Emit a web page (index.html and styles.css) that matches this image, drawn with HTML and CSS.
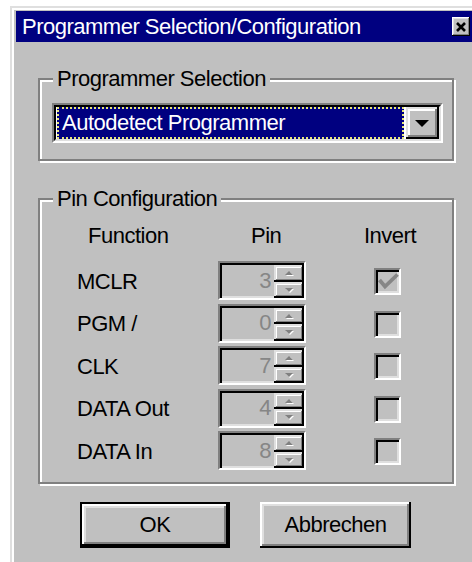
FILE: index.html
```html
<!DOCTYPE html>
<html lang="de">
<head>
<meta charset="utf-8">
<title>Programmer Selection/Configuration</title>
<link rel="stylesheet" href="styles.css">
</head>
<body>
<div class="window">
  <div class="frame">
    <div class="titlebar">
      <span class="caption">Programmer Selection/Configuration</span>
      <span class="close-btn">
        <svg width="10" height="10" viewBox="0 0 10 10"><path d="M1 1 L9 9 M9 1 L1 9" stroke="#000" stroke-width="2.6" fill="none"/></svg>
      </span>
    </div>
    <div class="client">
      <fieldset class="group group-select">
        <legend>Programmer Selection</legend>
        <div class="combo">
          <div class="combo-in">
            <div class="combo-field"><span class="combo-text">Autodetect Programmer</span></div>
            <span class="combo-btn"><span class="arrow-down"></span></span>
          </div>
        </div>
      </fieldset>

      <fieldset class="group group-pins">
        <legend>Pin Configuration</legend>
        <div class="pin-grid">
          <div class="hdr hdr-func">Function</div>
          <div class="hdr hdr-pin">Pin</div>
          <div class="hdr hdr-inv">Invert</div>

          <div class="pin-label">MCLR</div>
          <div class="spin"><div class="spin-in"><span class="spin-edit">3</span><span class="spin-btns"><span class="spin-up"></span><span class="spin-down"></span></span></div></div>
          <div class="check"><svg width="21" height="19" viewBox="0 0 21 19"><polyline points="1.5,7 7,13.5 19.5,1.5" fill="none" stroke="#868686" stroke-width="3.8"/></svg></div>

          <div class="pin-label">PGM /</div>
          <div class="spin"><div class="spin-in"><span class="spin-edit">0</span><span class="spin-btns"><span class="spin-up"></span><span class="spin-down"></span></span></div></div>
          <div class="check"></div>

          <div class="pin-label">CLK</div>
          <div class="spin"><div class="spin-in"><span class="spin-edit">7</span><span class="spin-btns"><span class="spin-up"></span><span class="spin-down"></span></span></div></div>
          <div class="check"></div>

          <div class="pin-label">DATA Out</div>
          <div class="spin"><div class="spin-in"><span class="spin-edit">4</span><span class="spin-btns"><span class="spin-up"></span><span class="spin-down"></span></span></div></div>
          <div class="check"></div>

          <div class="pin-label">DATA In</div>
          <div class="spin"><div class="spin-in"><span class="spin-edit">8</span><span class="spin-btns"><span class="spin-up"></span><span class="spin-down"></span></span></div></div>
          <div class="check"></div>
        </div>
      </fieldset>

      <div class="buttons">
        <button class="btn btn-default" type="button"><span class="btn-face">OK</span></button>
        <button class="btn" type="button"><span class="btn-face">Abbrechen</span></button>
      </div>
    </div>
  </div>
</div>
</body>
</html>
```

FILE: styles.css
```css
html, body {
  margin: 0;
  padding: 0;
  background: #fff;
  overflow: hidden;
}

body {
  font-family: "Liberation Sans", Arial, sans-serif;
  font-size: 22px;
  line-height: 24px;
  letter-spacing: -0.5px;
  color: #000;
}

/* window chrome: the dialog's right and bottom edges run off the page */
.window {
  margin: 6px 0 0 10px;
  width: 460px;
  border-top: 2px solid #dfdfdf;
  border-left: 2px solid #dfdfdf;
  background: #c0c0c0;
}

.frame {
  border-top: 2px solid #fff;
  border-left: 2px solid #fff;
  padding: 1px 0 0 2px;
}

.titlebar {
  height: 31px;
  background: #000080;
  color: #fff;
  display: flex;
  align-items: center;
  padding: 0 2px 0 6px;
}

.caption {
  flex: 1;
  white-space: nowrap;
}

.close-btn {
  width: 18px;
  height: 19px;
  background: #c0c0c0;
  display: flex;
  align-items: center;
  justify-content: center;
  box-shadow: inset -1px -1px #000, inset 1px 1px #fff, inset -2px -2px #808080, inset 2px 2px #dfdfdf;
}

.client {
  padding: 25px 0 14px 22px;
}

/* etched group boxes */
.group {
  box-sizing: border-box;
  width: 416px;
  margin: 0;
  min-width: 0;
  border: 2px solid #808080;
  box-shadow: inset 2px 2px #fff, 2px 2px #fff;
}

.group legend {
  padding: 0 4px;
  margin-left: 1px;
  background: #c0c0c0;
  white-space: nowrap;
}

.group-select {
  padding: 12px 9px 16px 12px;
  margin-bottom: 26px;
}

/* combo box */
.combo {
  box-sizing: border-box;
  height: 40px;
  border: 2px solid;
  border-color: #808080 #fff #fff #808080;
}

.combo-in {
  box-sizing: border-box;
  height: 100%;
  border: 2px solid;
  border-color: #000 #dfdfdf #dfdfdf #000;
  background: #fff;
  display: flex;
}

.combo-field {
  flex: 1;
  margin: 0 2px 0 1px;
  background: #000080;
  color: #fff;
  border: 2px dotted #e6e67a;
  display: flex;
  align-items: center;
  padding-left: 3px;
}

.combo-btn {
  width: 33px;
  background: #c0c0c0;
  display: flex;
  align-items: center;
  justify-content: center;
  box-shadow: inset -2px -2px #000, inset 2px 2px #dfdfdf, inset -4px -4px #808080, inset 4px 4px #fff;
}

.arrow-down {
  width: 0;
  height: 0;
  border-left: 7px solid transparent;
  border-right: 7px solid transparent;
  border-top: 7px solid #000;
  margin: 1px 1px 0 0;
}

/* pin table */
.group-pins {
  padding: 13px 0 12px 12px;
}

.pin-grid {
  display: grid;
  grid-template-columns: 166px 88px 68px 27px;
  grid-template-rows: 33.5px;
  grid-auto-rows: 39px;
  row-gap: 3.5px;
  align-items: center;
}

.hdr {
  align-self: start;
  white-space: nowrap;
}

.hdr-func { grid-column: 1; padding-left: 36px; }
.hdr-pin { grid-column: 2; padding-left: 33px; }
.hdr-inv { grid-column: 3 / 5; padding-left: 58px; }

.pin-label {
  grid-column: 1;
  padding-left: 25px;
  padding-top: 2px;
  white-space: nowrap;
}

.spin {
  grid-column: 2;
  box-sizing: border-box;
  height: 39px;
  border: 2px solid;
  border-color: #808080 #fff #fff #808080;
}

.spin-in {
  box-sizing: border-box;
  height: 100%;
  border-top: 2px solid #000;
  border-left: 2px solid #000;
  display: flex;
}

.spin-edit {
  flex: 1;
  border-bottom: 2px solid #dfdfdf;
  color: #868686;
  padding-right: 3px;
  display: flex;
  align-items: center;
  justify-content: flex-end;
}

.spin-btns {
  width: 30px;
  display: flex;
  flex-direction: column;
}

.spin-up, .spin-down {
  flex: 1;
  background: #c0c0c0;
  display: flex;
  align-items: center;
  justify-content: center;
  box-shadow: inset -2px -2px #000, inset 2px 2px #dfdfdf, inset -3px -3px #808080, inset 3px 3px #fff;
}

.spin-up::after, .spin-down::after {
  content: "";
  width: 0;
  height: 0;
  border-left: 4px solid transparent;
  border-right: 4px solid transparent;
  filter: drop-shadow(1px 1px 0 #fff);
}

.spin-up::after { border-bottom: 4px solid #808080; }
.spin-down::after { border-top: 4px solid #808080; }

.check {
  grid-column: 4;
  box-sizing: border-box;
  width: 27px;
  height: 27px;
  margin-top: 2px;
  border: 2px solid;
  border-color: #808080 #fff #fff #808080;
  background: #c0c0c0;
  box-shadow: inset 2px 2px #000, inset -2px -2px #dfdfdf;
  display: flex;
  align-items: center;
  justify-content: center;
}

.check svg {
  margin: 2px 0 0 2px;
}

/* push buttons */
.buttons {
  display: flex;
  gap: 30px;
  margin-top: 18px;
  padding-left: 42px;
}

.btn {
  box-sizing: border-box;
  height: 46px;
  width: 151px;
  padding: 0;
  border: none;
  background: #c0c0c0;
  font: inherit;
  letter-spacing: inherit;
  color: #000;
  display: flex;
  box-shadow: inset -2px -2px #000, inset 2px 2px #fff, inset -4px -4px #808080, inset 4px 4px #dfdfdf;
}

.btn-face {
  flex: 1;
  display: flex;
  align-items: center;
  justify-content: center;
}

.btn-default {
  width: 150px;
  border: 2px solid #000;
  box-shadow: none;
}

.btn-default .btn-face {
  box-shadow: inset -2px -2px #000, inset 2px 2px #fff, inset -4px -4px #808080, inset 4px 4px #dfdfdf;
}
```
